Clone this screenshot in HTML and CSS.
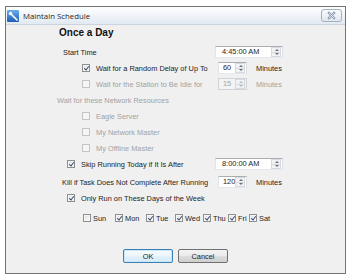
FILE: index.html
```html
<!DOCTYPE html>
<html lang="en">
<head>
    <meta charset="UTF-8">
    <title>Maintain Schedule</title>
    <link rel="stylesheet" href="styles.css">
</head>
<body>
    <div class="window">
        <div class="titlebar">
            <svg class="app-icon" width="12" height="12" viewBox="0 0 12 12">
                <defs>
                    <linearGradient id="ig" x1="0" y1="0" x2="0" y2="1">
                        <stop offset="0" stop-color="#6aaef0"/>
                        <stop offset="1" stop-color="#1d5db5"/>
                    </linearGradient>
                </defs>
                <rect x="0" y="0" width="12" height="12" rx="1" fill="url(#ig)"/>
                <path d="M4 4 L10 10" stroke="#fff" stroke-width="1.6" stroke-linecap="round"/>
                <path d="M1.5 3.5 L3.5 1.5 L5.5 3 L3 5.5 Z" fill="#fff"/>
            </svg>
            <span class="title">Maintain Schedule</span>
            <div class="close">
                <svg width="19" height="11" viewBox="0 0 19 11">
                    <path d="M7 3 L12 8 M12 3 L7 8" stroke="#8e9db0" stroke-width="2.4" stroke-linecap="square"/>
                    <path d="M7 3 L12 8 M12 3 L7 8" stroke="#f4f6f9" stroke-width="0.8"/>
                </svg>
            </div>
        </div>

        <div class="client">
            <div class="heading">Once a Day</div>

            <div class="row">
                <div class="lead pad-label">Start Time</div>
                <div class="spin time"><span class="val">4:45:00 AM</span><span class="arrows"><i class="up"></i><i class="down"></i></span></div>
            </div>
            <div class="row">
                <div class="lead pad-sub"><span class="cb on"></span><span class="txt">Wait for a Random Delay of Up To</span></div>
                <div class="spin num"><span class="val">60</span><span class="arrows"><i class="up"></i><i class="down"></i></span></div>
                <span class="unit">Minutes</span>
            </div>
            <div class="row disabled">
                <div class="lead pad-sub"><span class="cb"></span><span class="txt">Wait for the Station to Be Idle for</span></div>
                <div class="spin num"><span class="val">15</span><span class="arrows"><i class="up"></i><i class="down"></i></span></div>
                <span class="unit">Minutes</span>
            </div>
            <div class="row disabled">
                <div class="lead pad-group">Wait for these Network Resources</div>
            </div>
            <div class="row disabled">
                <div class="lead pad-sub"><span class="cb"></span><span class="txt">Eagle Server</span></div>
            </div>
            <div class="row disabled">
                <div class="lead pad-sub"><span class="cb"></span><span class="txt">My Network Master</span></div>
            </div>
            <div class="row disabled">
                <div class="lead pad-sub"><span class="cb"></span><span class="txt">My Offline Master</span></div>
            </div>
            <div class="row">
                <div class="lead pad-check"><span class="cb on"></span><span class="txt">Skip Running Today if It Is After</span></div>
                <div class="spin time"><span class="val">8:00:00 AM</span><span class="arrows"><i class="up"></i><i class="down"></i></span></div>
            </div>
            <div class="row spaced">
                <div class="lead pad-kill">Kill if Task Does Not Complete After Running</div>
                <div class="spin num"><span class="val">120</span><span class="arrows"><i class="up"></i><i class="down"></i></span></div>
                <span class="unit">Minutes</span>
            </div>
            <div class="row">
                <div class="lead pad-check"><span class="cb on"></span><span class="txt">Only Run on These Days of the Week</span></div>
            </div>
            <div class="row spaced days">
                <label class="day"><span class="cb"></span><span class="txt">Sun</span></label>
                <label class="day"><span class="cb on"></span><span class="txt">Mon</span></label>
                <label class="day"><span class="cb on"></span><span class="txt">Tue</span></label>
                <label class="day"><span class="cb on"></span><span class="txt">Wed</span></label>
                <label class="day"><span class="cb on"></span><span class="txt">Thu</span></label>
                <label class="day"><span class="cb on"></span><span class="txt">Fri</span></label>
                <label class="day"><span class="cb on"></span><span class="txt">Sat</span></label>
            </div>

            <div class="buttons">
                <button class="btn default">OK</button>
                <button class="btn">Cancel</button>
            </div>
        </div>
    </div>
</body>
</html>
```

FILE: styles.css
```css
body {
    margin: 0;
    background-color: #ffffff;
    font-family: "Liberation Sans", Arial, sans-serif;
    font-size: 7.4px;
    color: #1c1c1c;
}
.window {
    margin: 6px 0 0 5px;
    width: 341px;
    height: 268px;
    box-sizing: border-box;
    border: 1px solid #737373;
    background-color: #f0f0f0;
    display: flex;
    flex-direction: column;
}
.titlebar {
    height: 17px;
    flex: none;
    display: flex;
    align-items: center;
    padding-left: 1px;
    background: linear-gradient(#feffff, #e2e9f2);
    border-bottom: 1px solid #ccd5df;
}
.app-icon {
    flex: none;
}
.title {
    margin-left: 4px;
    font-family: "Open Sans", "Noto Sans", sans-serif;
    font-size: 7.8px;
    color: #1e1e1e;
}
.close {
    margin-left: auto;
    margin-right: 3px;
    width: 21px;
    height: 13px;
    box-sizing: border-box;
    border: 1px solid #a3b0c0;
    border-radius: 3px;
    background: linear-gradient(#f9fbfd, #e3e8ee);
    display: flex;
    align-items: center;
    justify-content: center;
}
.client {
    flex: 1;
    display: flex;
    flex-direction: column;
}
.heading {
    height: 16px;
    line-height: 16px;
    padding-left: 53px;
    margin-bottom: 3px;
    font-size: 10px;
    font-weight: bold;
    color: #111;
}
.row {
    height: 16px;
    display: flex;
    align-items: center;
}
.row.spaced {
    margin-top: 2px;
}
.lead {
    width: 209px;
    box-sizing: border-box;
    display: flex;
    align-items: center;
    white-space: nowrap;
}
.pad-label { padding-left: 57px; }
.pad-sub { padding-left: 76px; }
.pad-group { padding-left: 51px; }
.pad-check { padding-left: 61px; }
.pad-kill { padding-left: 56px; }

.cb {
    position: relative;
    flex: none;
    width: 8px;
    height: 8px;
    box-sizing: border-box;
    border: 1px solid #8e8f8f;
    background: linear-gradient(135deg, #dcdcdc, #ffffff);
    box-shadow: inset 0 0 0 1px #f6f6f6;
}
.cb.on::after {
    content: "";
    position: absolute;
    left: 2px;
    top: 0;
    width: 1.6px;
    height: 4.2px;
    border: solid #34466f;
    border-width: 0 1.3px 1.3px 0;
    transform: rotate(38deg);
}
.txt {
    margin-left: 6px;
}
.disabled {
    color: #a2a2a2;
}
.disabled .cb {
    border-color: #c4c4c4;
    background: #f5f5f5;
    box-shadow: none;
}

.spin {
    height: 12px;
    box-sizing: border-box;
    border: 1px solid #abadb3;
    border-left-color: #e2e3ea;
    border-right-color: #dbdfe6;
    border-bottom-color: #e3e9ef;
    background-color: #ffffff;
    display: flex;
    align-items: stretch;
}
.spin.time {
    width: 68px;
}
.spin.num {
    width: 29px;
    margin-left: 3px;
}
.spin .val {
    flex: 1;
    padding-left: 4px;
    line-height: 10px;
}
.spin.time .val {
    padding-left: 6px;
}
.arrows {
    width: 10px;
    display: flex;
    flex-direction: column;
    margin: 0 1px 0 0;
}
.arrows i {
    flex: 1;
    position: relative;
    border: 1px solid #d6d9de;
    background: #f1f2f4;
}
.arrows i + i {
    border-top: none;
}
.arrows i::after {
    content: "";
    position: absolute;
    left: 2.5px;
    top: 1px;
    border-left: 2px solid transparent;
    border-right: 2px solid transparent;
}
.arrows .up::after {
    border-bottom: 2px solid #6b6f78;
}
.arrows .down::after {
    top: 0.5px;
    border-top: 2px solid #6b6f78;
}
.disabled .spin {
    background-color: #f4f4f4;
    border-color: #cfd2d6;
}
.disabled .arrows i::after {
    border-bottom-color: #b9bcc2;
    border-top-color: #b9bcc2;
}
.disabled .arrows .up::after {
    border-top-color: transparent;
}
.disabled .arrows .down::after {
    border-bottom-color: transparent;
}
.unit {
    margin-left: 9px;
}

.days {
    height: 20px;
    padding-left: 77px;
    display: grid;
    grid-template-columns: 32px 31px 29px 28px 25px 21px auto;
}
.day {
    display: flex;
    align-items: center;
    white-space: nowrap;
}
.day .txt {
    margin-left: 2px;
}

.buttons {
    margin-top: 21px;
    display: flex;
    justify-content: center;
    gap: 5px;
}
.btn {
    width: 50px;
    height: 14px;
    padding: 0;
    border: 1px solid #707070;
    border-radius: 2px;
    background: linear-gradient(#f3f3f3 0%, #ebebeb 48%, #dddddd 52%, #cfcfcf 100%);
    font-family: "Liberation Sans", Arial, sans-serif;
    font-size: 7.4px;
    color: #1c1c1c;
}
.btn.default {
    border-color: #3c7fb1;
    background: linear-gradient(#f6fbfe 0%, #eef7fd 48%, #e2f1fb 52%, #d6ebf9 100%);
    box-shadow: inset 0 0 0 1px #c6e8fa;
}
```
